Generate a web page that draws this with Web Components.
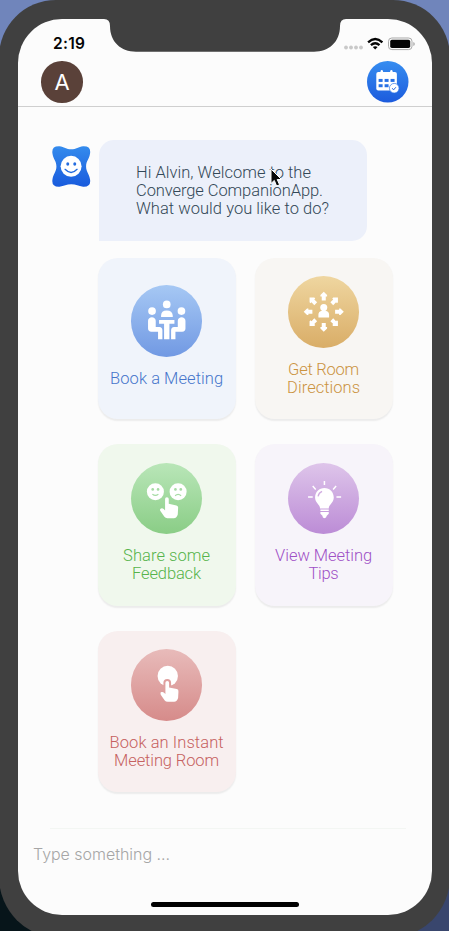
<!DOCTYPE html>
<html lang="en">
<head>
<meta charset="utf-8">
<title>Converge Companion</title>
<style>
html,body{margin:0;height:100%;overflow:hidden}
body{background:linear-gradient(#7085bb 0 50%,transparent 50%),linear-gradient(90deg,#07151a 50%,#39466d 50%);font-family:Roboto,sans-serif}
</style>
</head>
<body>
<phone-frame>
  <status-bar></status-bar>
  <app-header initial="A"></app-header>
  <chat-message>
    <fit-line w="175">Hi Alvin, Welcome to the</fit-line>
    <fit-line w="187">Converge CompanionApp.</fit-line>
    <fit-line w="193">What would you like to do?</fit-line>
  </chat-message>
  <action-grid>
    <action-card icon="meeting" style="--bg:#f0f4fb;--c1:#a6c8f4;--c2:#7199e3;--fg:#4674cb"><fit-line w="113">Book a Meeting</fit-line></action-card>
    <action-card icon="directions" style="--bg:#f8f6f3;--c1:#efd6a0;--c2:#d9ad67;--fg:#cb933f"><fit-line w="71">Get Room</fit-line><fit-line w="73">Directions</fit-line></action-card>
    <action-card icon="feedback" style="--bg:#f0f8ed;--c1:#b9e6b8;--c2:#8acd86;--fg:#56b44b"><fit-line w="87">Share some</fit-line><fit-line w="69">Feedback</fit-line></action-card>
    <action-card icon="tips" style="--bg:#f7f4fa;--c1:#dec5ea;--c2:#bc8cd6;--fg:#9f50c6"><fit-line w="97">View Meeting</fit-line><fit-line w="30">Tips</fit-line></action-card>
    <action-card icon="instant" style="--bg:#f8efef;--c1:#e8bbba;--c2:#d68b8a;--fg:#c66160"><fit-line w="114">Book an Instant</fit-line><fit-line w="105">Meeting Room</fit-line></action-card>
  </action-grid>
  <message-input>Type something ...</message-input>
</phone-frame>
<script>
const define = (name, html, setup) => customElements.define(name, class extends HTMLElement {
  connectedCallback() {
    if (this.shadowRoot) return;
    this.attachShadow({mode: 'open'}).innerHTML = html;
    if (setup) setup(this, this.shadowRoot);
  }
});

define('phone-frame', `<style>
:host{display:block;box-sizing:border-box;width:451px;height:938px;margin-left:-1px;padding:19px;background:#404040;border-radius:57px 57px 61px 61px}
.screen{position:relative;display:flex;flex-direction:column;width:414px;height:896px;background:#fcfcfc;border-radius:44px;overflow:hidden}
.notch{position:absolute;left:84px;top:0;z-index:2}
.pointer{position:absolute;left:252px;top:149px;z-index:3}
.home{position:absolute;left:133px;bottom:8px;width:148px;height:5px;border-radius:3px;background:#000}
</style>
<div class="screen">
<svg class="notch" width="246" height="33"><path fill="#404040" d="M0 0H246V0H244Q238 0 238 7C238 23 227 32.7 212 32.7H34C19 32.7 8 23 8 7Q8 0 2 0Z"/></svg>
<slot></slot>
<svg class="pointer" width="13" height="20"><path d="M1 1V15.5L4.3 12.4L6.6 18L9.6 16.8L7.2 11.5H11.5Z" fill="#080808" stroke="#fff" stroke-width="1"/></svg>
<div class="home"></div></div>`);

define('status-bar', `<style>
:host{display:flex;box-sizing:border-box;height:42px;padding:15px 17px 0 35px;justify-content:space-between;align-items:flex-start;font:600 15.5px/20px Inter,sans-serif;letter-spacing:.3px;color:#050505}
svg{margin-top:2px}
</style><span>2:19</span>
<svg width="72" height="16" viewBox="343.500 36 72 16">
<g fill="#c9c9c9"><circle cx="346.500" cy="47.500" r="1.900"/><circle cx="351.500" cy="47.500" r="1.900"/><circle cx="356.500" cy="47.500" r="1.900"/><circle cx="361.500" cy="47.500" r="1.900"/></g>
<g fill="none" stroke="#050505" stroke-width="2.300"><path d="M368.600 42.300Q375.700 35.600 382.900 42.300"/><path d="M371.400 45.200Q375.700 41.400 380 45.200"/></g><path d="M373.300 47.100Q375.700 45.300 378.100 47.100L375.700 49.600Z" fill="#050505"/>
<rect x="389" y="38" width="23.500" height="11.600" rx="3.300" fill="none" stroke="#a9a9a9"/><rect x="390.700" y="39.700" width="20" height="8.300" rx="1.700" fill="#050505"/><path d="M413.800 42V46Q415.300 45.300 415.300 44T413.800 42" fill="#a9a9a9"/></svg>`);

define('app-header', `<style>
:host{display:flex;box-sizing:border-box;height:46px;flex:none;padding:0 23.500px 0 23.400px;justify-content:space-between;border-bottom:1px solid #cfcfcf}
.avatar{width:41.500px;height:41.500px;border-radius:50%;background:#5a4139;color:#fff;text-align:center;font:400 22px/42.500px Inter,sans-serif}
</style><div class="avatar"></div>
<svg width="41.500" height="41.500" viewBox="0 0 125 125"><defs><linearGradient id="g" x2="0" y2="1"><stop stop-color="#368df0"/><stop offset="1" stop-color="#1c5bdd"/></linearGradient></defs>
<circle cx="62.500" cy="62.500" r="62.500" fill="url(#g)"/>
<g fill="#fff"><rect x="28" y="33" width="62" height="56" rx="6"/><rect x="41" y="27" width="7" height="13" rx="3.500"/><rect x="70" y="27" width="7" height="13" rx="3.500"/></g>
<g fill="#2871e5"><rect x="35" y="54" width="12" height="9"/><rect x="53" y="54" width="12" height="9"/><rect x="71" y="54" width="12" height="9"/><rect x="35" y="70" width="12" height="9"/><rect x="53" y="70" width="12" height="9"/></g>
<circle cx="82" cy="82" r="14.500" fill="#fff" stroke="#2871e5" stroke-width="2"/><path d="M76 82L80 87L87 79" fill="none" stroke="#2265df" stroke-width="3"/></svg>`,
(el, root) => root.querySelector('.avatar').textContent = el.getAttribute('initial'));

define('chat-message', `<style>
:host{display:flex;align-items:flex-start;gap:8px;flex:none;padding:33px 0 0 34px}
svg{margin-top:6px}
.bubble{box-sizing:border-box;width:268px;height:101px;padding:23.500px 0 0 37px;background:#ecf0fa;border-radius:15px 15px 15px 0;color:#334857;font-weight:300;font-size:16.500px;line-height:18px;margin-left:.5px}
</style><svg width="38.500" height="41" viewBox="0 0 115 123"><defs><linearGradient id="b" x2="0" y2="1"><stop stop-color="#348bed"/><stop offset="1" stop-color="#195bdd"/></linearGradient></defs>
<path d="M22 1C36 3 43 10 57.500 10S79 3 93 1Q117 0 114 22C112 39 102 45 102 61.500S112 84 114 101Q117 123 93 122C79 120 72 115 57.500 115S36 120 22 122Q-2 123 1 101C3 84 13 78 13 61.500S3 39 1 22Q-2 0 22 1Z" fill="url(#b)"/><circle cx="57" cy="61" r="31.500" fill="#fff"/><g fill="#246cdf"><ellipse cx="47" cy="54" rx="4.500" ry="5.500"/><ellipse cx="68" cy="54" rx="4.500" ry="5.500"/></g><path d="M39 70Q57 89 75 70" fill="none" stroke="#246cdf" stroke-width="4" stroke-linecap="round"/></svg>
<div class="bubble"><slot></slot></div>`);

define('action-grid', `<style>
:host{display:grid;grid-template-columns:138px 138px;grid-auto-rows:161.500px;gap:25px 19px;padding:16.600px 0 0 79.600px;flex:none}
</style><slot></slot>`);

const hand = 'M102 108A5.500 5.500 0 0 1 113 108V122L136 127Q142 128 141 135L140 154Q137 165 128 165H109Q103 165 100 161L88 144Q85 137 90 136Q94 134 98 138L102 142Z';
const arrow = '<path d="M107 47L117 57V61H113V73H101V61H97V57Z"/>';
const icons = {
  meeting: '<circle cx="107" cy="58" r="11.500"/><path d="M90 96V92Q90 76 107 76T125 92V96Z"/><path d="M84 105H130V116H115V162H99V116H84Z"/><g id="p"><circle cx="63" cy="78" r="11.500"/><path d="M51 107C51 93 74 93 74 107V126H85Q94 127 94 136V162H81V140H61Q51 139 51 130Z"/></g><use href="#p" transform="matrix(-1 0 0 1 214 0)"/>',
  directions: [0,45,90,135,180,225,270,315].map(a => `<g transform="rotate(${a} 107 107)">${arrow}</g>`).join('') + '<circle cx="107" cy="94" r="10.500"/><path d="M102 98H112V104Q123 106 123 116V124H91V116Q91 106 102 104Z"/>',
  feedback: `<circle cx="73" cy="86" r="25.500"/><circle cx="141" cy="86" r="25.500"/><g fill="#a5dba3"><circle cx="65" cy="79" r="4"/><circle cx="81" cy="79" r="4"/><circle cx="133" cy="79" r="4"/><circle cx="149" cy="79" r="4"/></g><path d="M64 93Q73 101 82 93M132 98Q141 90 150 98" fill="none" stroke="#a5dba3" stroke-width="3.500"/><path d="${hand}"/>`,
  tips: '<path d="M109 75C93 75 81 87 81 103C81 119 96 124 96 136H122C122 124 137 119 137 103C137 87 125 75 109 75ZM97 139H122V144H97ZM97 147H122V152L116 158Q115 165 109 165T103 158L97 152Z"/><path d="M90 100Q92 89 102 85" fill="none" stroke="#d1abe1" stroke-width="4"/><path d="M109 54V66M74 69L83 79M144 69L135 79M60 102H74M145 102H159" fill="none" stroke="#fff" stroke-width="4.500"/>',
  instant: `<circle cx="110" cy="81" r="30.500"/><g transform="translate(1 -7)"><path d="M96 119V108A11.500 11.500 0 0 1 119 108V119Z" fill="#df9f9e"/><path d="${hand}"/></g>`
};
define('action-card', `<style>
:host{display:flex;flex-direction:column;align-items:center;justify-content:center;gap:13px;box-sizing:border-box;background:var(--bg);border-radius:20px;box-shadow:0 1.500px 1.500px #0001}
.icon{display:flex;width:71.500px;height:71.500px;border-radius:50%;background:linear-gradient(var(--c1),var(--c2))}
.label{padding-bottom:3.800px;text-align:center;color:var(--fg);font-weight:300;font-size:16.500px;line-height:18px}
</style><div class="icon"></div><div class="label"><slot></slot></div>`,
(el, root) => root.querySelector('.icon').innerHTML = `<svg width="71.500" height="71.500" viewBox="0 0 214 214" fill="#fff">${icons[el.getAttribute('icon')]}</svg>`);

define('message-input', `<style>
:host{display:block;box-sizing:border-box;margin-top:auto;height:87px;padding:15px;font:300 16px/22px Inter,sans-serif;color:#a6a6a6;position:relative}
hr{position:absolute;left:32px;right:26px;top:0;margin:0;border:0;border-top:1px solid #f3f6f3}
</style><hr><fit-line w="137"><slot></slot></fit-line>`);

/* One line of text, letter-spaced to take up the width in its "w" attribute. */
define('fit-line', `<style>:host{display:block;white-space:nowrap}span{display:inline-block}</style><span><slot></slot></span>`,
(el, root) => {
  const span = root.querySelector('span');
  const host = el.getRootNode().host;
  const text = (el.textContent.trim() || (host ? host.textContent.trim() : ''));
  const space = (el.getAttribute('w') - span.getBoundingClientRect().width) / (text.length - 1);
  span.style.letterSpacing = space + 'px';
  span.style.marginRight = -space + 'px';
});
</script>
</body>
</html>
